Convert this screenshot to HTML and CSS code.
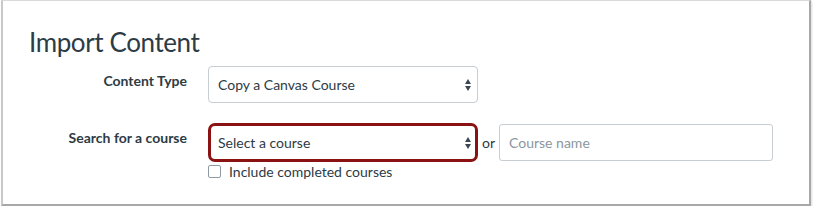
FILE: index.html
```html
<!DOCTYPE html>
<html lang="en">
<head>
  <meta charset="UTF-8" />
  <title>Import Content</title>
  <link rel="stylesheet" href="styles.css">
</head>
<body>
  <div class="panel">
    <h1 class="title">Import Content</h1>

    <div class="row">
      <label class="label">Content Type</label>
      <div class="field">
        <div class="select">
          <span>Copy a Canvas Course</span>
          <span class="arrows"></span>
        </div>
      </div>
    </div>

    <div class="row row-search">
      <label class="label">Search for a course</label>
      <div class="field">
        <div class="search-line">
          <div class="select select-focus">
            <span>Select a course</span>
            <span class="arrows"></span>
          </div>
          <span class="or">or</span>
          <div class="text-input">Course name</div>
        </div>
        <label class="check">
          <span class="box"></span>
          Include completed courses
        </label>
      </div>
    </div>
  </div>
</body>
</html>
```

FILE: styles.css
```css
body {
  margin: 0;
  background-color: #ffffff;
  font-family: Lato, 'Liberation Sans', sans-serif;
  color: #2d3b45;
}

.panel {
  margin-left: 1px;
  width: 810px;
  height: 206px;
  box-sizing: border-box;
  border-top: 1px solid #d9d9d9;
  border-left: 2px solid #c9c9c9;
  border-right: 2px solid #a8a8a8;
  border-bottom: 2px solid #a8a8a8;
  box-shadow: 1px 1px 2px rgba(0,0,0,0.15);
  padding: 26px 0 0 26px;
}

.title {
  margin: 0 0 9px 0;
  font-size: 26px;
  font-weight: 400;
  line-height: 30px;
  color: #2d3b45;
  letter-spacing: -0.4px;
}

.row {
  display: flex;
  align-items: flex-start;
}

.row-search {
  margin-top: 20px;
}

.label {
  width: 158px;
  text-align: right;
  font-size: 14px;
  font-weight: 700;
  padding-top: 6px;
  margin-right: 21px;
}

.select {
  position: relative;
  width: 270px;
  height: 37px;
  box-sizing: border-box;
  border: 1px solid #c7cdd1;
  border-radius: 4px;
  padding: 0 9px;
  display: flex;
  align-items: center;
  font-size: 14px;
  color: #2d3b45;
}

.arrows {
  position: absolute;
  right: 5px;
  top: 50%;
  margin-top: -7px;
  width: 7px;
  height: 14px;
}

.arrows::before,
.arrows::after {
  content: "";
  position: absolute;
  left: 0;
  border-left: 3.5px solid transparent;
  border-right: 3.5px solid transparent;
}

.arrows::before {
  top: 1px;
  border-bottom: 5px solid #3b4852;
}

.arrows::after {
  bottom: 1px;
  border-top: 5px solid #3b4852;
}

.search-line {
  display: flex;
  align-items: center;
}

.select-focus {
  border: 3px solid #8b1212;
  border-radius: 7px;
  padding: 0 7px;
  height: 39px;
}

.select-focus .arrows {
  right: 3px;
}

.or {
  font-size: 14px;
  margin: 0 4px 0 4px;
}

.text-input {
  width: 274px;
  height: 37px;
  box-sizing: border-box;
  border: 1px solid #c7cdd1;
  border-radius: 3px;
  padding: 0 9px;
  display: flex;
  align-items: center;
  font-size: 14px;
  color: #8b969e;
}

.check {
  display: flex;
  align-items: center;
  margin-top: 1px;
  font-size: 14px;
  color: #2d3b45;
}

.box {
  width: 11px;
  height: 11px;
  border: 1px solid #8f9aa3;
  border-radius: 2px;
  margin-right: 8px;
}
```
